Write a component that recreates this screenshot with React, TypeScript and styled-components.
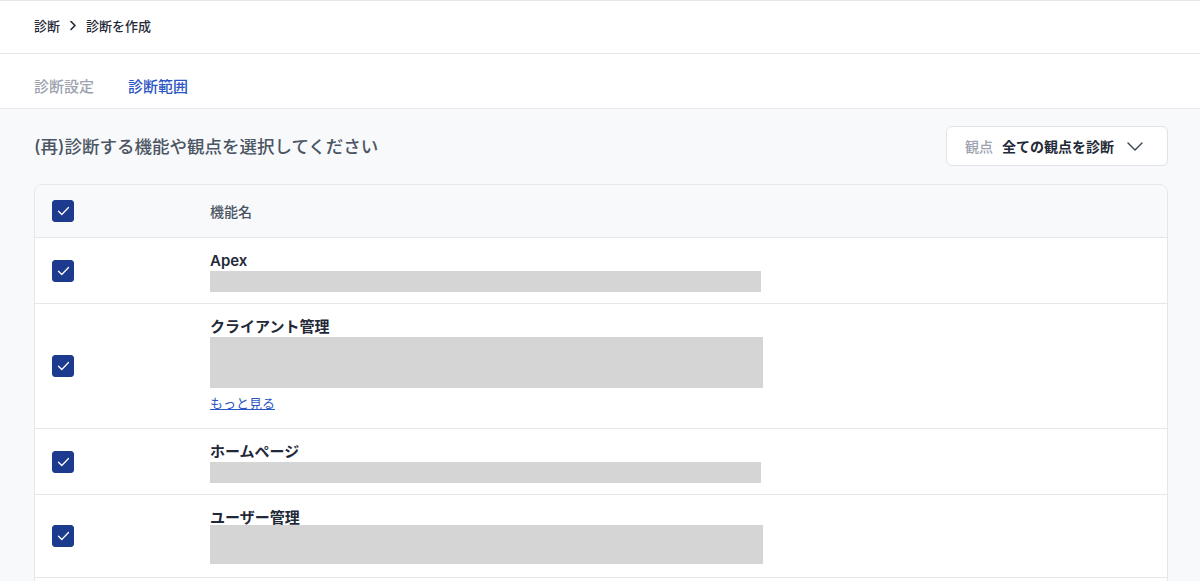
import React, { useState } from 'react';
import styled, { createGlobalStyle } from 'styled-components';

const GlobalStyle = createGlobalStyle`
  html, body {
    margin: 0;
    padding: 0;
    overflow: hidden;
    background: #f8f9fb;
    font-family: Inter, "Noto Sans CJK JP", "Noto Sans", sans-serif;
    color: #1f2937;
  }
  * { box-sizing: border-box; }
`;

type Feature = { name: string; bar: number; more?: boolean; barWidth: number; barGap: number; padBottom: number };

const features: Feature[] = [
  { name: 'Apex', bar: 21, barWidth: 551, barGap: 1, padBottom: 11 },
  { name: 'クライアント管理', bar: 51, more: true, barWidth: 553, barGap: 1, padBottom: 11 },
  { name: 'ホームページ', bar: 21, barWidth: 551, barGap: 1, padBottom: 11 },
  { name: 'ユーザー管理', bar: 39, barWidth: 553, barGap: -2, padBottom: 13 },
];

const CheckIcon = () => (
  <svg width="13" height="10" viewBox="0 0 13 10" fill="none">
    <path d="M1.5 5.2L4.8 8.5L11.5 1.5" stroke="#fff" strokeWidth="1.3" strokeLinecap="round" strokeLinejoin="round" />
  </svg>
);

const Check = ({ checked }: { checked: boolean }) => (
  <CheckBox $checked={checked}>{checked && <CheckIcon />}</CheckBox>
);

const App = () => {
  const [checked] = useState(features.map(() => true));

  return (
    <Page>
      <GlobalStyle />
      <Header>
        <Crumb>診断</Crumb>
        <svg width="8" height="11" viewBox="0 0 8 11" fill="none">
          <path d="M2 1.5L6 5.5L2 9.5" stroke="#1f2937" strokeWidth="1.6" strokeLinecap="round" strokeLinejoin="round" />
        </svg>
        <Crumb>診断を作成</Crumb>
      </Header>
      <Tabs>
        <Tab>診断設定</Tab>
        <Tab $active>診断範囲</Tab>
      </Tabs>
      <Main>
        <TitleRow>
          <Title>(再)診断する機能や観点を選択してください</Title>
          <Select>
            <SelectLabel>観点</SelectLabel>
            <SelectValue>全ての観点を診断</SelectValue>
            <svg width="16" height="9" viewBox="0 0 16 9" fill="none">
              <path d="M1 1L8 8L15 1" stroke="#374151" strokeWidth="1.4" strokeLinecap="round" strokeLinejoin="round" />
            </svg>
          </Select>
        </TitleRow>
        <Table>
          <HeadRow>
            <CheckCell>
              <Check checked />
            </CheckCell>
            <HeadText>機能名</HeadText>
          </HeadRow>
          {features.map((f, i) => (
            <Row key={f.name}>
              <CheckCell>
                <Check checked={checked[i]} />
              </CheckCell>
              <NameCell $pb={f.padBottom}>
                <Name>{f.name}</Name>
                <Bar $h={f.bar} $w={f.barWidth} $gap={f.barGap} />
                {f.more && <More href="#">もっと見る</More>}
              </NameCell>
            </Row>
          ))}
          <Row />
        </Table>
      </Main>
    </Page>
  );
};

const Page = styled.div`
  width: 1200px;
  height: 581px;
  overflow: hidden;
  background: #f8f9fb;
`;

const Header = styled.div`
  height: 54px;
  background: #fff;
  border-top: 1px solid #e5e7eb;
  border-bottom: 1px solid #e5e7eb;
  display: flex;
  align-items: center;
  gap: 9px;
  padding: 0 34px 4px;
`;

const Crumb = styled.span`
  font-size: 13px;
  font-weight: 500;
  color: #1f2937;
`;

const Tabs = styled.div`
  height: 55px;
  background: #fff;
  border-bottom: 1px solid #e5e7eb;
  display: flex;
  align-items: center;
  gap: 34px;
  padding: 8px 34px 0;
`;

const Tab = styled.div<{ $active?: boolean }>`
  font-size: 15px;
  font-weight: 500;
  color: ${(p) => (p.$active ? '#2b55c4' : '#9ca3af')};
`;

const Main = styled.div`
  padding: 17px 32px 0 34px;
`;

const TitleRow = styled.div`
  display: flex;
  justify-content: space-between;
  align-items: center;
  margin-bottom: 18px;
`;

const Title = styled.h1`
  margin: 0 0 1px;
  font-size: 17.5px;
  font-weight: 500;
  color: #4b5563;
`;

const Select = styled.div`
  width: 222px;
  height: 40px;
  background: #fff;
  border: 1px solid #dfe2e7;
  border-radius: 6px;
  display: flex;
  align-items: center;
  padding: 0 15px 0 18px;
  gap: 9px;
  svg { margin-left: 4px; }
`;

const SelectLabel = styled.span`
  font-size: 14px;
  font-weight: 500;
  color: #9ca3af;
`;

const SelectValue = styled.span`
  font-size: 14px;
  font-weight: 600;
  color: #1f2937;
`;

const Table = styled.div`
  background: #fff;
  border: 1px solid #e5e7eb;
  border-radius: 8px 8px 0 0;
  overflow: hidden;
`;

const HeadRow = styled.div`
  height: 52px;
  background: #f8f9fb;
  display: flex;
  align-items: center;
`;

const HeadText = styled.span`
  font-size: 14px;
  font-weight: 500;
  color: #4b5563;
`;

const Row = styled.div`
  display: flex;
  align-items: center;
  min-height: 60px;
  border-top: 1px solid #e5e7eb;
`;

const CheckCell = styled.div`
  width: 175px;
  flex-shrink: 0;
  padding-left: 17px;
  display: flex;
  align-items: center;
`;

const CheckBox = styled.div<{ $checked: boolean }>`
  width: 22px;
  height: 22px;
  border-radius: 3px;
  background: ${(p) => (p.$checked ? '#1c3b8f' : '#fff')};
  border: 1px solid ${(p) => (p.$checked ? '#1c3b8f' : '#cbd5e1')};
  display: flex;
  align-items: center;
  justify-content: center;
`;

const NameCell = styled.div<{ $pb: number }>`
  display: flex;
  flex-direction: column;
  align-items: flex-start;
  padding: 14px 0 ${(p) => p.$pb}px;
`;

const Name = styled.div`
  font-size: 15px;
  font-weight: 600;
  line-height: 18px;
  color: #1f2937;
`;

const Bar = styled.div<{ $h: number; $w: number; $gap: number }>`
  width: ${(p) => p.$w}px;
  height: ${(p) => p.$h}px;
  margin-top: ${(p) => p.$gap}px;
  background: #d5d5d5;
`;

const More = styled.a`
  margin-top: 6px;
  font-size: 13px;
  line-height: 18px;
  color: #2b55c4;
  text-decoration: underline;
  margin-bottom: 5px;
`;

export default App;
